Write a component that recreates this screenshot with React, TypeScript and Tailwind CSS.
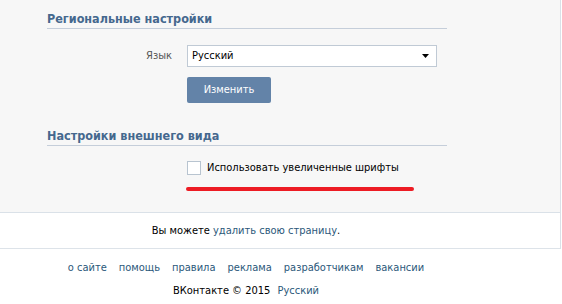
import { memo } from 'react'

function Arrow() {
  return (
    <svg width="7" height="4" viewBox="0 0 7 4" className="block">
      <polygon points="0,0 7,0 3.5,4" fill="#000" />
    </svg>
  )
}

const footerLinks = ['о сайте', 'помощь', 'правила', 'реклама', 'разработчикам', 'вакансии']

function App() {
  return (
    <div
      className="w-[562px] h-[304px] overflow-hidden bg-white text-[11px] leading-[14px] text-black"
      style={{ fontFamily: '"DejaVu Sans Condensed", "Liberation Sans", sans-serif' }}
    >
      <div className="w-[561px] border-r border-[#dae1e8]">
        {/* settings panel */}
        <div className="h-[213px] bg-[#f7f7f7] border-b border-[#dae1e8] pt-[11px]">
          <div className="ml-[47px] w-[400px]">
            <h2 className="border-b border-[#c5ceda] pb-[1px] text-[12.5px] font-bold leading-[16px] text-[#45688e]">
              Региональные настройки
            </h2>
            <div className="mt-[16px] flex items-center">
              <span className="w-[125px] text-right text-[#555]">Язык</span>
              <div className="ml-[15px] w-[250px] h-[22px] border border-[#c0cad5] bg-white flex items-center justify-between pl-[4px] pr-[7px]">
                <span>Русский</span>
                <Arrow />
              </div>
            </div>
            <button className="ml-[140px] mt-[10px] block w-[84px] h-[26px] rounded-[2px] bg-[#6383a8] text-white">
              Изменить
            </button>

            <h2 className="mt-[25px] border-b border-[#c5ceda] pb-[1px] text-[12.5px] font-bold leading-[16px] text-[#45688e]">
              Настройки внешнего вида
            </h2>
            <label className="ml-[140px] mt-[15px] flex h-[14px] items-center gap-[6px]">
              <span className="w-[14px] h-[14px] border border-[#b8c4d0] bg-white" />
              <span>Использовать увеличенные шрифты</span>
            </label>
            <div className="ml-[139px] mt-[12px] w-[228px] h-[4px] rounded-full bg-[#ed1c24]" />
          </div>
        </div>

        {/* delete page */}
        <div className="h-[36px] bg-white border-b border-[#dde3e9] flex items-center">
          <p className="w-[492px] text-center">
            Вы можете <a className="text-[#2b587a]">удалить свою страницу</a>.
          </p>
        </div>
      </div>

      {/* footer */}
      <div className="mt-[11px] w-[492px] flex justify-center gap-[12px] leading-[16px] text-[#2b587a]">
        {footerLinks.map((l) => (
          <a key={l}>{l}</a>
        ))}
      </div>
      <div className="mt-[7px] w-[492px] text-center leading-[16px]">
        ВКонтакте © 2015 <a className="ml-[4px] text-[#2b587a]">Русский</a>
      </div>
    </div>
  )
}

export default memo(App)
